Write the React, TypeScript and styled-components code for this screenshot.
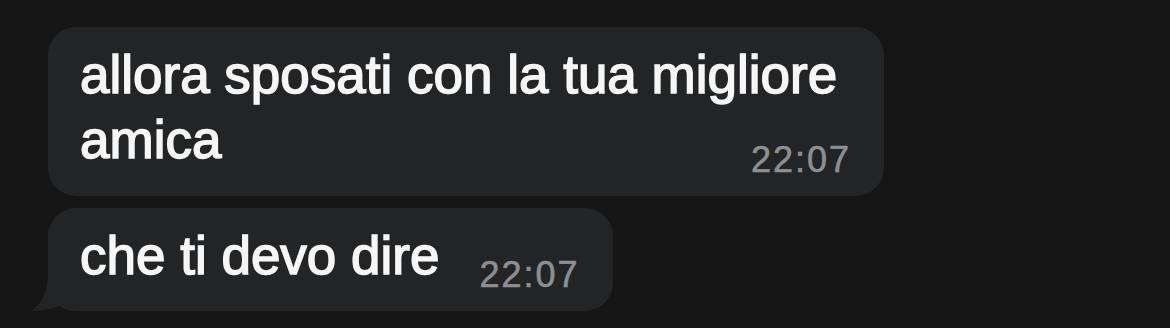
import styled, { createGlobalStyle } from "styled-components";

const GlobalStyle = createGlobalStyle`
  html, body {
    margin: 0;
    padding: 0;
    background: #151515;
  }
  body {
    font-family: "Liberation Sans", Arial, sans-serif;
  }
`;

const Chat = styled.div`
  width: 1170px;
  height: 328px;
  box-sizing: border-box;
  padding: 27px 0 0 48px;
  display: flex;
  flex-direction: column;
  align-items: flex-start;
  gap: 12px;
  overflow: hidden;
`;

const Bubble = styled.div<{ $textWidth?: number }>`
  position: relative;
  display: flow-root;
  box-sizing: content-box;
  max-width: ${(p) => (p.$textWidth ? `${p.$textWidth}px` : "none")};
  padding: 15px 34px 18px 32px;
  background: #232425;
  border-radius: 28px;
  color: #f6f6f6;
  font-size: 53px;
  line-height: 65px;
  -webkit-text-stroke: 1.5px #f6f6f6;
`;

const Time = styled.span<{ $gap: number; $top: number }>`
  float: right;
  margin: ${(p) => p.$top}px -1px 0 ${(p) => p.$gap}px;
  font-size: 36px;
  line-height: 36px;
  letter-spacing: 2px;
  color: #8e8f90;
  -webkit-text-stroke: 0.6px #8e8f90;
`;

const Tail = styled.svg`
  position: absolute;
  left: -28px;
  bottom: 0;
  width: 52px;
  height: 44px;
`;

const App: React.FC = () => {
  return (
    <>
      <GlobalStyle />
      <Chat>
        <Bubble $textWidth={770}>
          allora sposati con la tua migliore amica
          <Time $gap={20} $top={35}>
            22:07
          </Time>
        </Bubble>
        <Bubble>
          che ti devo dire
          <Time $gap={40} $top={34}>
            22:07
          </Time>
          <Tail viewBox="0 0 52 44">
            <path
              d="M28 0 L28 9 Q27 34 11 44 Q26 44 40 39 Q46 44 52 44 L52 0 Z"
              fill="#232425"
            />
          </Tail>
        </Bubble>
      </Chat>
    </>
  );
};

export default App;
